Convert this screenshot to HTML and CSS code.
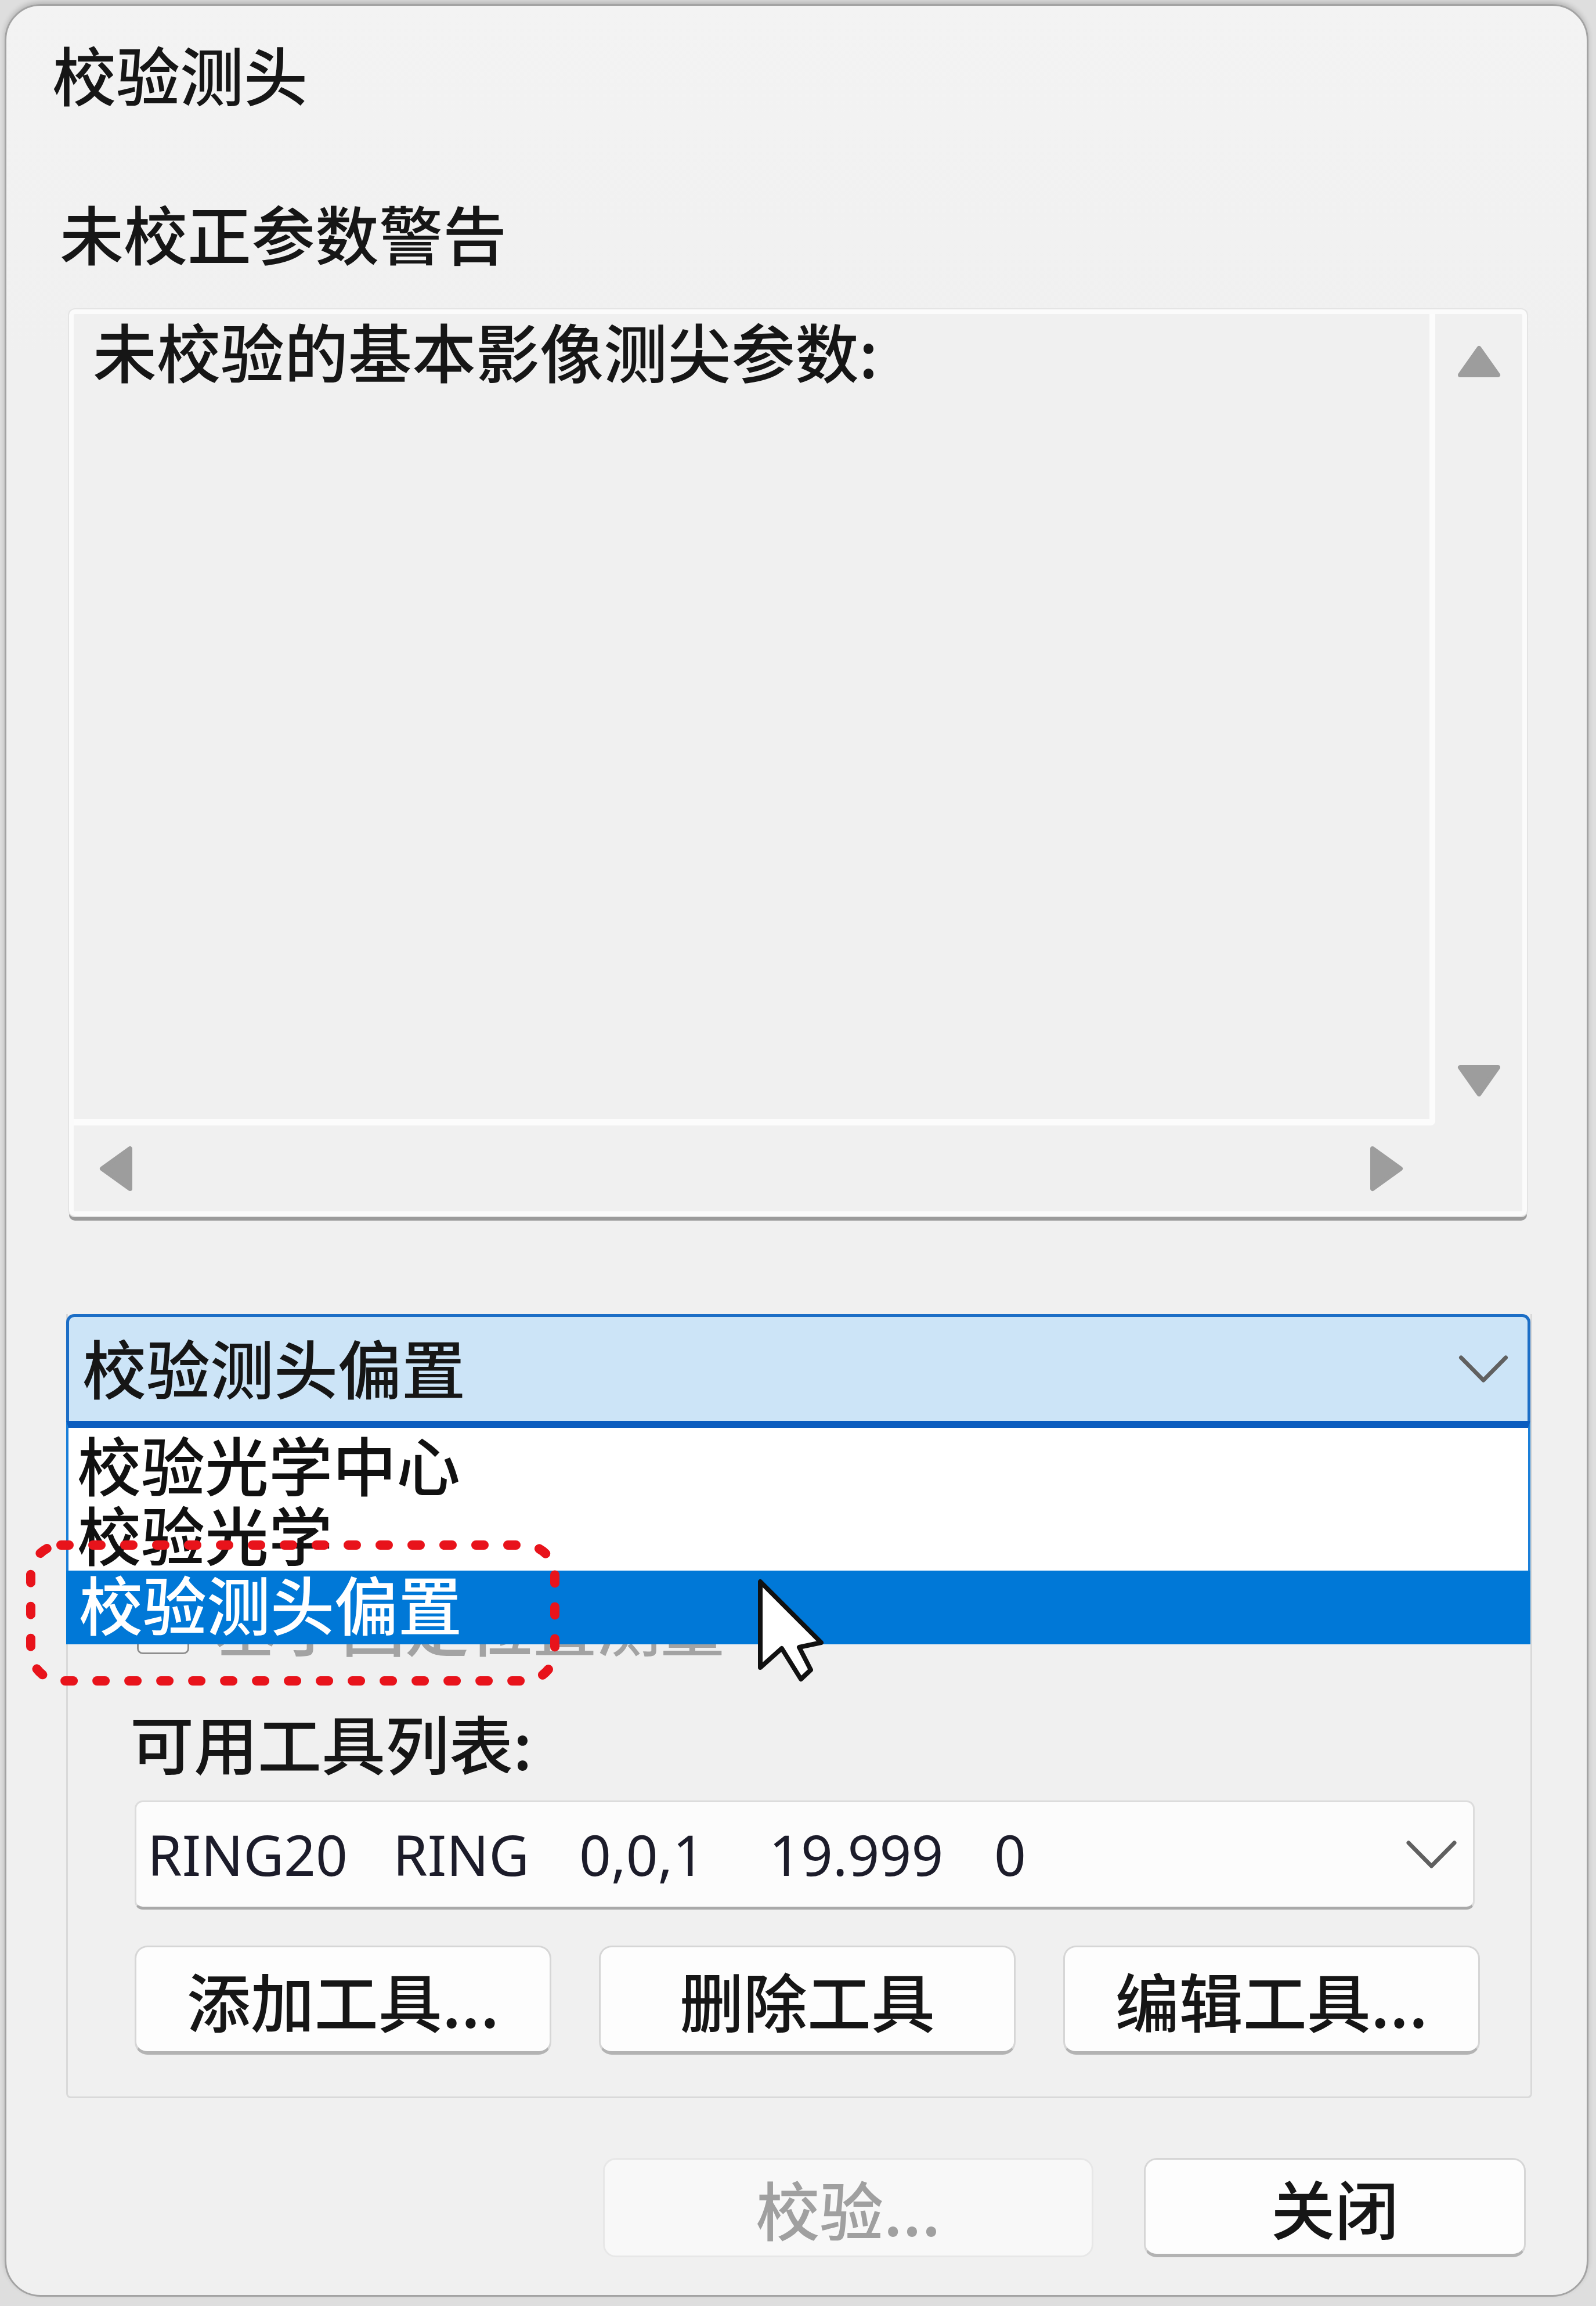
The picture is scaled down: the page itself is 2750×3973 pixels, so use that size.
FILE: index.html
```html
<!DOCTYPE html>
<html lang="zh-CN">
<head>
<meta charset="utf-8">
<title>校验测头</title>
<link rel="stylesheet" href="styles.css">
</head>
<body>
<div class="dialog">
  <div class="title">校验测头</div>
  <div class="section-label">未校正参数警告</div>

  <div class="memo">
    <div class="memo-content">未校验的基本影像测尖参数:</div>
    <div class="vscroll">
      <svg class="arrow-v" viewBox="0 0 75 58"><path d="M37.5 6 L70 52 H5 Z"/></svg>
      <svg class="arrow-v" viewBox="0 0 75 58"><path d="M5 6 H70 L37.5 52 Z"/></svg>
    </div>
    <div class="hscroll">
      <svg class="arrow-h" viewBox="0 0 59 81"><path d="M5 40.5 L53 6 V75 Z"/></svg>
      <svg class="arrow-h" viewBox="0 0 59 81"><path d="M6 6 L54 40.5 L6 75 Z"/></svg>
    </div>
    <div class="corner"></div>
  </div>

  <div class="group">
    <div class="combo combo-open">
      <span class="combo-text">校验测头偏置</span>
      <svg class="chev" viewBox="0 0 90 52"><polyline points="6.5,6 45,45 83.5,6"/></svg>
    </div>

    <div class="check-row">
      <span class="checkbox"></span>
      <span class="check-label">基于固定位置测量</span>
    </div>

    <div class="tools-label">可用工具列表:</div>

    <div class="tool-combo">
      <div class="tool-fields">
        <span>RING20</span><span>RING</span><span>0,0,1</span><span>19.999</span><span>0</span>
      </div>
      <svg class="chev-small" viewBox="0 0 91 53"><polyline points="6,6 45.5,46 85,6"/></svg>
    </div>

    <div class="tool-buttons">
      <button class="btn">添加工具...</button>
      <button class="btn">删除工具</button>
      <button class="btn">编辑工具...</button>
    </div>

    <ul class="dropdown">
      <li>校验光学中心</li>
      <li>校验光学</li>
      <li class="selected">校验测头偏置</li>
    </ul>
  </div>

  <div class="footer">
    <button class="btn btn-footer btn-disabled">校验...</button>
    <button class="btn btn-footer btn-close">关闭</button>
  </div>

  <svg class="annotation" viewBox="0 0 940 272"><rect x="18" y="18" width="903" height="234" rx="52" ry="52"/></svg>
  <svg class="cursor" viewBox="0 0 130 190"><path d="M10 10 L10 158 L47 125 L80 178 L97 162 L77 123 L115 115 Z"/></svg>
</div>
</body>
</html>
```

FILE: styles.css
```css
* {
  box-sizing: border-box;
}

html, body {
  margin: 0;
  padding: 0;
}

body {
  width: 2750px;
  height: 3973px;
  background: #dedede;
  padding: 7px 0 0 8px;
  font-family: "Noto Sans CJK SC", "Microsoft YaHei", sans-serif;
  font-weight: 500;
  color: #161616;
  overflow: hidden;
}

.dialog {
  position: relative;
  width: 2729px;
  height: 3950px;
  background: linear-gradient(#f3f3f3, #f0f0f0 600px);
  border: 3px solid #a3a3a3;
  border-radius: 62px;
  box-shadow: 0 -4px 8px rgba(0, 0, 0, 0.18);
  display: flex;
  flex-direction: column;
  align-items: flex-start;
}

.title {
  margin: 61px 0 0 79px;
  font-size: 110px;
  line-height: 110px;
}

.section-label {
  margin: 164px 0 0 92px;
  font-size: 110px;
  line-height: 110px;
}

/* multi-line read-only edit box */
.memo {
  margin: 78px 0 0 108px;
  width: 2512px;
  height: 1562px;
  border: 8px solid #fbfbfb;
  border-radius: 10px;
  background: #f0f0f0;
  box-shadow: 0 0 0 2px #e4e4e4, 0 8px 0 0 #9b9b9b;
  display: grid;
  grid-template-columns: 1fr 150px;
  grid-template-rows: 1fr 148px;
}

.memo-content {
  border-right: 10px solid #fcfcfc;
  border-bottom: 11px solid #fcfcfc;
  border-bottom-right-radius: 8px;
  padding: 7px 0 0 33px;
  font-size: 110px;
  line-height: 110px;
}

.vscroll {
  display: flex;
  flex-direction: column;
  justify-content: space-between;
  align-items: center;
  padding: 53px 0 48px;
}

.hscroll {
  display: flex;
  justify-content: space-between;
  align-items: center;
  padding: 0 55px 0 44px;
}

.arrow-v {
  width: 75px;
  height: 58px;
}

.arrow-h {
  width: 59px;
  height: 81px;
}

.arrow-v path,
.arrow-h path {
  fill: #9d9d9d;
  stroke: #9d9d9d;
  stroke-width: 8;
  stroke-linejoin: round;
}

/* group box with combo header */
.group {
  position: relative;
  margin: 169px 0 0 103px;
  width: 2526px;
  border: 3px solid #d9d9d9;
  border-top: 0;
  border-radius: 0 0 8px 8px;
  padding: 0 87px 72px 115px;
  display: flex;
  flex-direction: column;
  align-items: stretch;
}

.combo {
  margin: 0 -87px 0 -118px;
  height: 184px;
  display: flex;
  align-items: center;
  justify-content: space-between;
  padding: 0 31px 0 23px;
  font-size: 110px;
  line-height: 110px;
}

.combo-open {
  background: #cce4f7;
  border: 5px solid #1c6ec6;
  border-bottom: 0;
  border-radius: 14px 14px 0 0;
}

.combo-text {
  margin-bottom: 10px;
}

.chev {
  width: 90px;
  height: 52px;
}

.chev polyline,
.chev-small polyline {
  fill: none;
  stroke: #606060;
  stroke-width: 7;
  stroke-linecap: round;
  stroke-linejoin: round;
}

.check-row {
  margin-top: 294px;
  height: 110px;
  display: flex;
  align-items: flex-end;
  color: #a3a3a3;
  font-size: 110px;
  line-height: 110px;
}

.checkbox {
  width: 90px;
  height: 86px;
  margin: 0 42px 2px 4px;
  border: 3px solid #8f8f8f;
  border-radius: 10px;
  background: #f6f6f6;
}

.tools-label {
  margin: 94px 0 0 -8px;
  font-size: 110px;
  line-height: 110px;
}

.tool-combo {
  margin: 46px 9px 0 0;
  height: 188px;
  background: #fcfcfc;
  border: 3px solid #dcdcdc;
  border-bottom: 5px solid #a9a9a9;
  border-radius: 14px;
  display: flex;
  align-items: center;
  justify-content: space-between;
  padding: 0 26px 0 19px;
}

.tool-fields {
  display: grid;
  grid-template-columns: 423px 321px 327px 388px auto;
  font-family: "Noto Sans", "Open Sans", sans-serif;
  font-weight: 400;
  font-size: 96px;
  line-height: 96px;
  color: #1c1c2a;
  white-space: nowrap;
}

.chev-small {
  width: 91px;
  height: 53px;
}

.tool-buttons {
  margin-top: 62px;
  display: grid;
  grid-template-columns: repeat(3, 1fr);
  gap: 82px;
}

.btn {
  height: 188px;
  margin: 0;
  padding: 0;
  font-family: "Noto Sans CJK SC", "Microsoft YaHei", sans-serif;
  font-weight: 500;
  font-size: 110px;
  line-height: 110px;
  color: #161616;
  background: #fdfdfd;
  border: 3px solid #d6d6d6;
  border-bottom: 6px solid #b3b3b3;
  border-radius: 22px;
  text-align: center;
}

/* open dropdown list, overlays the group contents */
.dropdown {
  position: absolute;
  top: 184px;
  left: -3px;
  width: 2523px;
  margin: 0;
  padding: 6px 0 0;
  list-style: none;
  background: #ffffff;
  border-top: 12px solid #0a5cbf;
  border-left: 4px solid #1a7fd9;
  border-right: 4px solid #1a7fd9;
  font-size: 110px;
  line-height: 110px;
  z-index: 2;
}

.dropdown li {
  height: 120px;
  padding-left: 15px;
  color: #111111;
  white-space: nowrap;
}

.dropdown li.selected {
  height: 127px;
  margin: 0 -4px;
  padding-left: 22px;
  background: #0078d7;
  color: #ffffff;
}

.footer {
  align-self: stretch;
  margin-top: 103px;
  padding-right: 105px;
  display: flex;
  justify-content: flex-end;
  gap: 87px;
}

.btn-footer {
  height: 171px;
}

.btn-disabled {
  width: 845px;
  background: #f8f8f8;
  border: 3px solid #e7e7e7;
  color: #a0a0a0;
}

.btn-close {
  width: 658px;
}

.annotation {
  position: absolute;
  left: 24px;
  top: 2634px;
  width: 940px;
  height: 272px;
  z-index: 3;
}

.annotation rect {
  fill: none;
  stroke: #e8131b;
  stroke-width: 16;
  stroke-dasharray: 14 41;
  stroke-linecap: round;
}

.cursor {
  position: absolute;
  left: 1289px;
  top: 2705px;
  width: 130px;
  height: 190px;
  z-index: 4;
}

.cursor path {
  fill: #ffffff;
  stroke: #111111;
  stroke-width: 8;
  stroke-linejoin: round;
}
```
